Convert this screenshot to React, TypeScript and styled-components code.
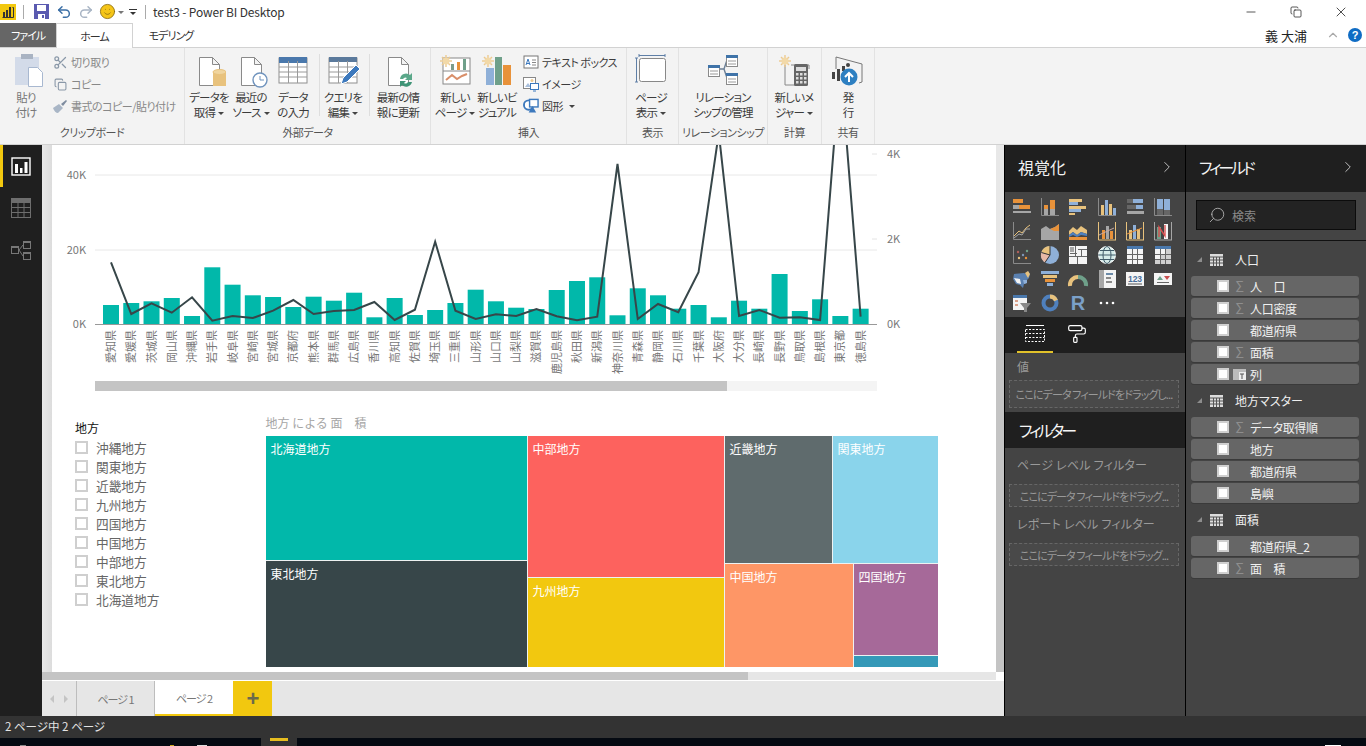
import React from 'react';
import styled, { createGlobalStyle } from 'styled-components';
import { Scissors, Undo2, Redo2, Smile, Minus, X, ChevronRight, ChevronUp, Search, PaintRoller, Copy } from 'lucide-react';

const Global = createGlobalStyle`
  html, body { margin: 0; padding: 0; overflow: hidden; background: #000; }
  * { box-sizing: border-box; }
  body { font-family: "Noto Sans CJK JP", "Liberation Sans", sans-serif; font-feature-settings: "palt"; }
`;

const Shell = styled.div`
  width: 1366px; height: 746px; display: flex; flex-direction: column; overflow: hidden; background: #fff;
`;
const TitleBar = styled.div`
  height: 23px; flex: none; display: flex; align-items: center; background: #fff; color: #333; font-size: 12px;
`;
const Qat = styled.div`
  display: flex; align-items: center; width: 153px; flex: none; height: 23px;
`;
const QatSlot = styled.span<{ $w: number }>`
  width: ${p => p.$w}px; flex: none; display: flex; align-items: center; justify-content: center;
`;
const QatSep = styled.span`
  width: 1px; height: 14px; background: #aaa; flex: none;
`;
const TitleText = styled.span`
  flex: 1; font-size: 12px; letter-spacing: -0.15px; color: #333;
`;
const WinBtns = styled.div`
  display: flex; width: 138px; flex: none; padding-right: 2px; color: #222; align-items: center;
`;
const WinBtn = styled.span`
  width: 45.3px; display: flex; justify-content: center;
`;
const TabRow = styled.div`
  height: 24px; flex: none; display: flex; align-items: stretch; background: #fff; font-size: 11px; letter-spacing: -1px; color: #333;
`;
const FileTab = styled.div`
  width: 56px; background: #666; color: #fff; display: flex; align-items: center; justify-content: center;
`;
const HomeTab = styled.div`
  width: 77px; background: #fff; border: 1px solid #d2d2d2; border-bottom: 0; margin-bottom: -1px; position: relative; z-index: 1;
  display: flex; align-items: center; justify-content: center;
`;
const RibbonTab = styled.div`
  width: 76px; display: flex; align-items: center; justify-content: center;
`;
const UserArea = styled.div`
  margin-left: auto; display: flex; align-items: center; padding-right: 4px; color: #222; font-size: 13px; letter-spacing: 0;
`;
const UserName = styled.span`
  margin-right: 19px;
`;
const Help = styled.span`
  width: 14px; height: 14px; border-radius: 50%; background: #0f6cc4; color: #fff; font-size: 11px; font-weight: 700;
  display: flex; align-items: center; justify-content: center; margin-left: 8px; font-family: "Liberation Sans", sans-serif;
`;
const Ribbon = styled.div`
  height: 98px; flex: none; display: flex; background: #f3f3f3; border-top: 1px solid #d2d2d2; border-bottom: 1px solid #d2d2d2;
`;
const Group = styled.div<{ $w: number }>`
  width: ${p => p.$w}px; flex: none; display: flex; flex-direction: column; border-right: 1px solid #e2e2e2;
`;
const GroupBody = styled.div<{ $pad?: number }>`
  flex: 1; display: flex; align-items: flex-start; padding: 2px 0 0 ${p => p.$pad ?? 0}px; min-height: 0;
`;
const GroupLabel = styled.div`
  height: 22px; flex: none; text-align: center; font-size: 11px; letter-spacing: -0.5px; line-height: 21px; color: #555; white-space: nowrap;
`;
const BigBtn = styled.div<{ $w?: number; $dim?: boolean }>`
  width: ${p => p.$w ?? 42}px; flex: none; display: flex; flex-direction: column; align-items: center;
  color: ${p => (p.$dim ? '#777' : '#3c3c3c')};
`;
const BigIcon = styled.div`
  height: 40px; display: flex; align-items: center; justify-content: center;
`;
const BigText = styled.div`
  font-size: 11.5px; line-height: 15px; text-align: center; white-space: nowrap; letter-spacing: -0.8px;
`;
const Caret = styled.span`
  display: inline-block; width: 0; height: 0; margin-left: 3px; vertical-align: 2px;
  border-left: 3px solid transparent; border-right: 3px solid transparent; border-top: 3px solid #444;
`;
const VSep = styled.div<{ $ml: number; $mr: number }>`
  width: 1px; height: 62px; margin: 4px ${p => p.$mr}px 0 ${p => p.$ml}px; background: #dedede; flex: none;
`;
const SmallCol = styled.div`
  display: flex; flex-direction: column; padding-top: 1px; margin-left: 5px;
`;
const SmallBtn = styled.div<{ $dim?: boolean }>`
  height: 22px; display: flex; align-items: center; gap: 3px; font-size: 11px; letter-spacing: -0.5px; white-space: nowrap;
  color: ${p => (p.$dim ? '#888' : '#3c3c3c')};
`;
const IconBox = styled.span`
  width: 16px; height: 16px; flex: none; display: flex; align-items: center; justify-content: center; color: #8a98a8;
`;
const Main = styled.div`
  height: 571px; flex: none; display: flex; background: #000;
`;
const Rail = styled.div`
  width: 42px; flex: none; background: #1f1f1f; display: flex; flex-direction: column;
`;
const RailItem = styled.div<{ $active?: boolean }>`
  height: 42px; display: flex; align-items: center; justify-content: center;
  border-left: 3px solid ${p => (p.$active ? '#f2c80f' : 'transparent')}; padding-right: 3px;
`;
const Work = styled.div`
  width: 962px; flex: none; display: flex; flex-direction: column; background: #e6e6e6;
`;
const CanvasRow = styled.div`
  height: 527px; flex: none; display: flex;
`;
const Gutter = styled.div`
  width: 10px; flex: none; background: linear-gradient(90deg, #e8e8e8, #dcdcdc);
`;
const Page = styled.div`
  width: 944px; flex: none; background: #fff; display: flex; flex-direction: column; overflow: hidden;
`;
const ChartSvg = styled.svg`
  display: block; flex: none; font-family: "Noto Sans CJK JP", sans-serif; font-feature-settings: normal;
`;
const Lower = styled.div`
  flex: 1; display: flex; padding-left: 23px;
`;
const Slicer = styled.div`
  width: 190.5px; flex: none; padding-top: 19px; font-feature-settings: normal;
`;
const SlicerTitle = styled.div`
  font-size: 12px; line-height: 18px; color: #111; margin-bottom: 1px;
`;
const SlicerRow = styled.div`
  height: 19px; display: flex; align-items: center; gap: 8px; font-size: 12.7px; color: #666;
`;
const Check = styled.span`
  width: 13px; height: 13px; border: 2px solid #cfcfcf; background: #fff; flex: none;
`;
const TreeWrap = styled.div`
  width: 672px; flex: none; display: flex; flex-direction: column; padding-top: 15px; font-feature-settings: normal;
`;
const TreeTitle = styled.div`
  height: 21px; font-size: 12px; line-height: 16px; color: #a6a6a6; white-space: pre;
`;
const Tree = styled.div`
  height: 231px; display: flex; gap: 1px; flex: none; background: #eef2f2;
`;
const TreeCol = styled.div<{ $w?: number }>`
  ${p => (p.$w ? `width:${p.$w}px;flex:none;` : 'flex:1;min-width:0;')}
  display: flex; flex-direction: column; gap: 1px;
`;
const TreeRow = styled.div<{ $h?: number }>`
  ${p => (p.$h ? `height:${p.$h}px;flex:none;` : 'flex:1;min-height:0;')}
  display: flex; gap: 1px;
`;
const Cell = styled.div<{ $bg: string; $basis: number }>`
  background: ${p => p.$bg}; flex: 0 0 ${p => p.$basis}px; color: #fff; font-size: 12px; line-height: 16px; padding: 5px 0 0 5px; overflow: hidden; white-space: nowrap;
`;
const Fill = styled.div<{ $bg: string }>`
  background: ${p => p.$bg}; flex: 1; color: #fff; font-size: 12px; line-height: 16px; padding: 5px 0 0 5px; min-width: 0; min-height: 0; overflow: hidden; white-space: nowrap;
`;
const VScroll = styled.div`
  width: 8px; flex: none; display: flex; flex-direction: column; background: #e8e8e8;
`;
const VThumb = styled.div`
  margin-top: 155px; flex: 1; background: #c4c4c4;
`;
const HScrollRow = styled.div`
  height: 8px; flex: none; display: flex; background: #fff;
`;
const HTrack = styled.div`
  width: 954px; flex: none; background: #e6e6e6;
`;
const HThumb = styled.div`
  width: 706px; height: 8px; background: #c4c4c4;
`;
const PageTabs = styled.div`
  height: 36px; flex: none; display: flex; border-top: 1px solid #fff; background: #e6e6e6; font-size: 11px; letter-spacing: -1px; color: #777;
`;
const Arrows = styled.div`
  width: 35px; flex: none; display: flex; align-items: center; justify-content: center; gap: 10px; border-right: 1px solid #bdbdbd;
`;
const Arrow = styled.span<{ $dir: 'l' | 'r' }>`
  width: 0; height: 0; border-top: 4px solid transparent; border-bottom: 4px solid transparent;
  ${p => p.$dir === 'l' ? 'border-right: 4px solid #c4c4c4;' : 'border-left: 4px solid #c4c4c4;'}
`;
const PageTab = styled.div<{ $active?: boolean }>`
  width: 78px; flex: none; display: flex; align-items: center; justify-content: center;
  ${p => p.$active
    ? 'background:#fff;border-bottom:2px solid #f2c80f;'
    : 'border-right:1px solid #bdbdbd;'}
`;
const AddTab = styled.div`
  width: 39px; flex: none; background: #f2c80f; color: #6b6b4b; display: flex; align-items: center; justify-content: center;
  font-size: 22px; font-weight: 700; line-height: 1; font-family: "Liberation Sans", sans-serif;
`;
const Pane = styled.div`
  width: 180px; flex: none; background: #444; display: flex; flex-direction: column; margin-left: 1px; color: #ddd;
`;
const PaneHead = styled.div`
  height: 47px; flex: none; background: #1f1f1f; color: #f2f2f2; display: flex; align-items: center; justify-content: space-between;
  font-size: 16px; padding: 0 9px 3px 13px;
`;
const KanaHead = styled(PaneHead)`
  letter-spacing: -3px;
`;
const VizGrid = styled.div`
  height: 125px; flex: none; display: grid; grid-template-columns: repeat(6, 28.2px); grid-auto-rows: 24px;
  padding: 3px 0 0 3px; justify-items: center; align-items: center;
`;
const VizIcon = styled.svg`
  overflow: visible;
`;
const VizTabs = styled.div`
  height: 36px; flex: none; background: #1f1f1f; display: flex; padding-left: 12px;
`;
const VizTab = styled.div<{ $active?: boolean }>`
  width: 36px; display: flex; align-items: center; justify-content: center; margin-right: 6px; color: #fff;
  border-bottom: 2px solid ${p => (p.$active ? '#e2c22a' : 'transparent')};
`;
const PaneLabel = styled.div<{ $h: number; $pb?: number }>`
  height: ${p => p.$h}px; flex: none; display: flex; align-items: center; padding: 0 0 ${p => p.$pb ?? 0}px 12px; font-size: 12px; letter-spacing: 0.2px; color: #9a9a9a; white-space: nowrap;
`;
const Drop = styled.div<{ $h: number }>`
  height: ${p => p.$h}px; flex: none; margin: 0 6px 0 4px; border: 1px dashed #666; font-size: 11px; letter-spacing: -0.9px; color: #999; white-space: nowrap;
  display: flex; align-items: center; justify-content: center; overflow: hidden; background: #494949;
`;
const FilterHead = styled.div`
  height: 36px; flex: none; margin-top: 4px; background: #1f1f1f; color: #f5f5f5; font-size: 16px; letter-spacing: -3px; display: flex; align-items: center; padding-left: 14px;
`;
const SearchArea = styled.div`
  height: 49px; flex: none; padding: 8px 10px 0; border-bottom: 1px solid #111;
`;
const SearchBox = styled.div`
  height: 30px; background: #232323; border: 1px solid #0c0c0c; display: flex; align-items: center; gap: 6px; padding-left: 11px; color: #8a8a8a; font-size: 12px;
`;
const FlipSearch = styled(Search)`
  transform: scaleX(-1);
`;
const FieldList = styled.div`
  padding: 4px 7px 0 5px; flex: 1;
`;
const TableHead = styled.div`
  height: 31px; display: flex; align-items: center; font-size: 12px; color: #eee; padding: 0 0 2px 6px;
`;
const Tri = styled.span`
  width: 0; height: 0; border-left: 5px solid transparent; border-bottom: 5px solid #8d8d8d; margin-right: 8px;
`;
const THIcon = styled.span`
  width: 13px; height: 12px; margin-right: 12px; display: flex;
`;
const FieldRow = styled.div`
  height: 20px; margin-bottom: 2px; background: #666; border-radius: 3px; box-shadow: 0 1px 0 #3a3a3a;
  display: flex; align-items: center; padding-left: 26px; font-size: 12px; letter-spacing: -0.3px; color: #f0f0f0; white-space: pre;
`;
const FieldCheck = styled.span`
  width: 12px; height: 12px; background: #fff; border: 2px solid #cfcfcf; flex: none; margin-right: 4px;
`;
const KindSlot = styled.span`
  width: 13px; flex: none; margin-right: 4px; color: #8e8e8e; font-size: 14px; text-align: center; line-height: 12px; display: flex; justify-content: center;
`;
const Status = styled.div`
  height: 22px; flex: none; background: #333; color: #e4e4e4; font-size: 11.5px; display: flex; align-items: center; padding: 0 0 2px 5px;
`;
const Taskbar = styled.div`
  height: 8px; flex: none; background: #050a12; display: flex; align-items: flex-end;
`;
const TaskMark = styled.span<{ $ml: number; $w: number; $c: string }>`
  margin-left: ${p => p.$ml}px; width: ${p => p.$w}px; height: 1px; background: ${p => p.$c}; flex: none;
`;
const TaskSlot = styled.div`
  margin-left: 54px; width: 36px; height: 8px; background: #333; display: flex; justify-content: center;
`;
const TaskIcon = styled.span`
  width: 18px; height: 3px; background: #e6bd20;
`;
const TaskEnd = styled.div`
  margin-left: auto; margin-right: 25px; width: 16px; height: 1px; background: #fff;
`;

const Doc = ({ children }: { children?: React.ReactNode }) => (
  <svg width="34" height="36" viewBox="0 0 34 36">
    <path d="M7.500 5.500h13l7 7v21h-20z M20.500 5.500v7h7" fill="#fff" stroke="#8a8a8a" />
    {children}
  </svg>
);
const GridSvg = ({ pen }: { pen?: boolean }) => (
  <svg width="34" height="34" viewBox="0 0 34 34">
    <rect x="3" y="5" width="28" height="25" fill="#fff" stroke="#8f8f8f" />
    <rect x="3" y="4" width="28" height={pen ? 5 : 6} fill={pen ? '#5b7a9c' : '#4a78ac'} />
    {[14, 19, 24].map(y => <line key={y} x1="3" x2="31" y1={y} y2={y} stroke="#9a9a9a" />)}
    {[12.5, 21.5].map(x => <line key={x} x1={x} x2={x} y1="8" y2="30" stroke="#9a9a9a" />)}
    {pen && <path d="M15 31l2-6 13-13 4 4-13 13z" fill="#3d79bd" stroke="#fff" />}
  </svg>
);
const Sun = () => (
  <g>
    <g stroke="#ecc98f" strokeWidth="1.4">
      <line x1="2" y1="8" x2="14" y2="8" /><line x1="8" y1="2" x2="8" y2="14" />
      <line x1="4" y1="4" x2="12" y2="12" /><line x1="12" y1="4" x2="4" y2="12" />
    </g>
    <circle cx="8" cy="8" r="3.500" fill="#f2d9a8" />
  </g>
);
const IcClipboard = () => (
  <svg width="36" height="36" viewBox="-6 0 36 36">
    <rect x="1" y="5" width="24" height="28" fill="#d3dbe9" />
    <rect x="7" y="2" width="12" height="5" fill="#a9b3c2" />
    <path d="M14.500 15.500h9l5 5v14h-14z" fill="#fff" stroke="#a8b8d0" />
  </svg>
);
const IcBrush = () => (
  <svg width="16" height="16" viewBox="0 0 16 16">
    <path d="M1 10l6-4 4 4-5 5c-2 0-4-2-5-5z" fill="#a9b6c6" /><path d="M9 6l5-4 1 1-4 5z" fill="#7f8da0" />
  </svg>
);
const IcData = () => (
  <Doc><rect x="21" y="20" width="13" height="14" fill="#e8c27d" /><ellipse cx="27.500" cy="20" rx="6.500" ry="2.500" fill="#f0d59f" stroke="#e8c27d" /></Doc>
);
const IcRecent = () => (
  <Doc><circle cx="26" cy="28" r="7" fill="#fff" stroke="#6f93bd" strokeWidth="1.400" /><path d="M26 24v4h4" fill="none" stroke="#6f93bd" /></Doc>
);
const IcRefresh = () => (
  <Doc><path d="M19 27a6 6 0 0 1 10-4l2-2v7h-7l2-2a3 3 0 0 0-4 1z" fill="#5ba88a" /><path d="M31 30a6 6 0 0 1-10 3l-2 2v-6h6l-2 2a3 3 0 0 0 4-1z" fill="#3f9476" /></Doc>
);
const IcNewPage = () => (
  <svg width="34" height="34" viewBox="0 0 34 34">
    <rect x="5" y="5" width="27" height="26" fill="#fff" stroke="#888" />
    <line x1="5" y1="18" x2="32" y2="18" stroke="#888" />
    <rect x="13" y="11" width="3" height="6" fill="#7c9c8a" /><rect x="19" y="9" width="3" height="8" fill="#e8923a" /><rect x="25" y="6" width="3" height="11" fill="#6fa08a" />
    <path d="M8 27l6-5 5 4 5-3 5-2" fill="none" stroke="#d98f6a" strokeWidth="2" />
    <Sun />
  </svg>
);
const IcNewVisual = () => (
  <svg width="34" height="34" viewBox="0 0 34 34">
    <rect x="6" y="15" width="8" height="17" fill="#8fb0d8" /><rect x="15" y="4" width="7" height="28" fill="#6fa08a" /><rect x="23" y="12" width="8" height="20" fill="#e8923a" />
    <Sun />
  </svg>
);
const IcTextBox = () => (
  <svg width="16" height="16" viewBox="0 0 16 16"><rect x="1" y="2" width="14" height="12" fill="#fff" stroke="#777" /><path d="M3 11l2-6 2 6M4 9.500h2" fill="none" stroke="#3d79bd" /><path d="M9 6h4M9 8.500h4M9 11h4" stroke="#888" /></svg>
);
const IcImage = () => (
  <svg width="16" height="16" viewBox="0 0 16 16"><rect x="0.500" y="1.500" width="12" height="11" fill="#fff" stroke="#888" /><path d="M2 11l3-4 3 4z" fill="#a9bfdc" /><circle cx="9" cy="4.500" r="1.500" fill="#ecc98f" /><rect x="7.500" y="7.500" width="8" height="6" fill="#fff" stroke="#3d79bd" /><path d="M10 15h3" stroke="#3d79bd" /></svg>
);
const IcShapes = () => (
  <svg width="17" height="16" viewBox="0 0 17 16"><circle cx="6" cy="7" r="5" fill="#fff" stroke="#3d79bd" strokeWidth="2" /><rect x="7" y="1" width="9" height="8" fill="#fff" stroke="#3d79bd" strokeWidth="1.500" /><path d="M6 15l4-7 4 7z" fill="#3d79bd" /></svg>
);
const IcPageView = () => (
  <svg width="32" height="32" viewBox="0 0 32 32"><rect x="4.500" y="4.500" width="26" height="23" rx="2" fill="#fff" stroke="#888" /><path d="M4 1.500h26M4 0v3M30 0v3M1.500 4v24M0 4h3M0 28h3" stroke="#5f7fa6" /></svg>
);
const IcRelation = () => (
  <svg width="32" height="32" viewBox="0 0 32 32">
    <path d="M12 15h5l3-9M17 15l3 9" fill="none" stroke="#6b7f96" strokeWidth="1.400" />
    {[[1, 11], [19, 1], [19, 19]].map(([x, y]) => (
      <g key={x + '-' + y}><rect x={x + 0.5} y={y + 0.5} width="11" height="11" fill="#fff" stroke="#8a8a8a" /><rect x={x} y={y} width="12" height="3" fill="#3f73a8" /><path d={`M${x + 2} ${y + 6}h8M${x + 2} ${y + 9}h8`} stroke="#999" /></g>
    ))}
  </svg>
);
const IcMeasure = () => (
  <svg width="34" height="34" viewBox="0 0 34 34">
    <path d="M8 12v20h18M32 12v4" fill="none" stroke="#888" /><path d="M14 12h18" stroke="#888" />
    <rect x="17" y="11" width="14" height="22" rx="1.500" fill="#666" />
    <rect x="19" y="14" width="10" height="4" fill="#ddd" />
    {[20, 24, 28].map(y => [19, 23, 27].map(x => <rect key={x + '.' + y} x={x} y={y} width="2.500" height="2.500" fill="#ddd" />))}
    <Sun />
  </svg>
);
const IcPublish = () => (
  <svg width="34" height="34" viewBox="0 0 34 34">
    <path d="M5 4l26 7v18l-3 1M5 4v12" fill="none" stroke="#777" />
    <rect x="1" y="19" width="3" height="7" fill="#444" /><rect x="6" y="16" width="3" height="12" fill="#444" /><rect x="11" y="13" width="3" height="5" fill="#444" />
    <circle cx="18" cy="24" r="8.500" fill="#2d7fc1" /><path d="M18 29v-9M14 24l4-4 4 4" fill="none" stroke="#fff" strokeWidth="2" />
    <circle cx="17" cy="12" r="2" fill="#444" />
  </svg>
);
const Logo = () => (
  <svg width="16" height="16" viewBox="0 0 16 16"><rect width="16" height="16" fill="#f2c80f" /><rect x="3" y="8" width="2" height="5" fill="#333" /><rect x="6" y="6" width="2" height="7" fill="#333" /><rect x="9" y="3" width="2" height="10" fill="#333" /><path d="M12.500 3.500h1v10h-11" fill="none" stroke="#333" /></svg>
);
const Save = () => (
  <svg width="15" height="15" viewBox="0 0 15 15"><rect width="15" height="15" fill="#5a5ab0" /><rect x="3" y="1" width="9" height="6" fill="#fff" /><rect x="4" y="10" width="7" height="5" fill="#fff" /><rect x="8" y="11" width="2" height="3" fill="#5a5ab0" /></svg>
);
const Drop2 = () => (
  <svg width="8" height="8" viewBox="0 0 8 8"><path d="M1 3h6L4 6z" fill="#777" /></svg>
);
const QatMore = () => (
  <svg width="8" height="8" viewBox="0 0 8 8"><path d="M0 1.500h8" stroke="#333" /><path d="M1 4h6L4 7z" fill="#333" /></svg>
);
const RailReport = () => (
  <svg width="20" height="19" viewBox="0 0 20 19"><rect x="1" y="1" width="18" height="17" fill="#1f1f1f" stroke="#fff" strokeWidth="1.400" /><rect x="4" y="7" width="3" height="9" fill="#fff" /><rect x="9" y="11" width="2.500" height="5" fill="#fff" /><rect x="13.500" y="5" width="3" height="11" fill="#fff" /></svg>
);
const RailData = () => (
  <svg width="20" height="20" viewBox="0 0 20 20"><rect x="0.500" y="0.500" width="19" height="19" fill="none" stroke="#6e6e6e" /><rect y="0" width="20" height="5" fill="#6e6e6e" />{[9.5, 14.5].map(y => <line key={y} x1="0" x2="20" y1={y} y2={y} stroke="#6e6e6e" />)}{[7, 13].map(x => <line key={x} x1={x} x2={x} y1="4" y2="20" stroke="#6e6e6e" />)}</svg>
);
const RailModel = () => (
  <svg width="20" height="19" viewBox="0 0 20 19" fill="none" stroke="#777"><rect x="0.500" y="5.500" width="7" height="7" /><rect x="12.500" y="0.500" width="7" height="7" /><rect x="12.500" y="11.500" width="7" height="7" /><path d="M8 9l4-5M8 9l4 6" /><path d="M1 6h6M13 1h6M13 12h6" strokeWidth="2" /></svg>
);
const TableGlyph = () => (
  <svg width="13" height="12" viewBox="0 0 13 12"><rect width="13" height="12" fill="#ddd" />{[3, 6, 9].map(y => <line key={y} x1="0" x2="13" y1={y} y2={y} stroke="#555" />)}{[3.5, 6.5, 9.5].map(x => <line key={x} x1={x} x2={x} y1="3" y2="12" stroke="#555" />)}</svg>
);
const CalcGlyph = () => (
  <svg width="13" height="11" viewBox="0 0 13 11"><rect width="13" height="11" fill="#bbb" /><rect x="6" y="3" width="7" height="8" fill="#eee" /><path d="M7 5h4M9 5v5" stroke="#555" /></svg>
);
const FieldsGlyph = () => (
  <svg width="22" height="20" viewBox="0 0 22 20" fill="none" stroke="#fff"><path d="M2 1.500h18" /><rect x="1.500" y="5.500" width="19" height="12" strokeDasharray="2 1.500" /><path d="M1.500 9.500h19M1.500 13.500h19" strokeDasharray="2 1.500" /></svg>
);

const O = '#e8923a', B = '#8fb0d8', T = '#e8c27d', G = '#a6a6a6', A = '#8a8a8a', W = '#f4f4f4', D = '#666', S = '#6fa08a';
const R = ({ x, y, w, h, c }: { x: number; y: number; w: number; h: number; c: string }) => <rect x={x} y={y} width={w} height={h} fill={c} />;
const Axes = () => <path d="M.5 0v17.500H18" fill="none" stroke={A} />;
const vizIcons: React.ReactNode[] = [
  <><R x={0} y={1} w={10} h={4} c={O} /><R x={0} y={7} w={6} h={4} c={G} /><R x={6} y={7} w={11} h={4} c={O} /><R x={0} y={13} w={18} h={2} c={G} /></>,
  <><Axes /><R x={3} y={7} w={4} h={10} c={O} /><R x={3} y={11} w={4} h={6} c={G} /><R x={9} y={2} w={5} h={9} c={O} /><R x={9} y={11} w={5} h={6} c={G} /></>,
  <><R x={0} y={1} w={13} h={3} c={T} /><R x={0} y={4} w={9} h={3} c={B} /><R x={0} y={8} w={17} h={3} c={T} /><R x={0} y={11} w={12} h={3} c={B} /><R x={0} y={15} w={6} h={2} c={T} /></>,
  <><Axes /><R x={3} y={7} w={3} h={10} c={T} /><R x={7} y={2} w={3} h={15} c={B} /><R x={11} y={6} w={3} h={11} c={T} /><R x={15} y={10} w={3} h={7} c={B} /></>,
  <><R x={1} y={1} w={6} h={4} c={D} /><R x={7} y={1} w={10} h={4} c={B} /><R x={1} y={7} w={9} h={4} c={D} /><R x={10} y={7} w={7} h={4} c={B} /><R x={1} y={13} w={17} h={3} c={G} /></>,
  <><Axes /><R x={3} y={1} w={6} h={10} c={B} /><R x={3} y={11} w={6} h={6} c={D} /><R x={10} y={1} w={6} h={11} c={B} /><R x={10} y={12} w={6} h={5} c={D} /></>,
  <><Axes /><path d="M1 14l5-5 3 2 4-5 4-3" fill="none" stroke={T} /><path d="M1 16l5-4 3 1 4-6 4 0" fill="none" stroke={G} /></>,
  <><path d="M0 18V7l5-3 4 3 5-2 4-3v16z" fill={G} /><path d="M9 7l5-2 4-3v7h-5z" fill={O} /></>,
  <><path d="M0 9l4-4 4 3 4-4 6 4v4l-6-2-4 3-4-3-4 3z" fill={T} /><path d="M0 13l4-3 4 3 4-3 6 2v2l-6-1-4 2-4-2-4 2z" fill="#4f80bd" /><R x={0} y={15} w={18} h={3} c={O} /></>,
  <><path d="M.5 0v18H18M17.500 0v18" fill="none" stroke={T} /><R x={4} y={8} w={3} h={9} c={O} /><R x={8} y={4} w={3} h={13} c={G} /><R x={12} y={9} w={3} h={8} c={O} /><path d="M1 13l15-7" stroke="#c9a9a0" /></>,
  <><path d="M.5 0v18H18M17.500 0v18" fill="none" stroke={T} /><R x={3} y={8} w={3} h={9} c={T} /><R x={7} y={3} w={3} h={14} c={B} /><R x={11} y={7} w={3} h={10} c={T} /><path d="M1 12l15-6" stroke={O} /></>,
  <><path d="M.5 0v18H18M17.500 0v18" fill="none" stroke={G} /><R x={3} y={5} w={4} h={12} c={S} /><R x={10} y={2} w={4} h={15} c={W} /><path d="M5 15V5l6 9V3" fill="none" stroke="#d84f4f" strokeWidth="1.400" /></>,
  <><Axes /><circle cx="5" cy="6" r="1.200" fill="#b0605c" /><circle cx="10" cy="9" r="1.200" fill="#7f98b8" /><circle cx="14" cy="5" r="1.200" fill={S} /><circle cx="6" cy="12" r="1.200" fill={T} /><circle cx="13" cy="12" r="1.200" fill={O} /></>,
  <><circle cx="9" cy="9" r="9" fill={B} /><path d="M9 9V0A9 9 0 0 0 .4 6.500z" fill={T} /><path d="M9 9L.4 6.500A9 9 0 0 0 4 16.500z" fill="#e6b8a6" /><path d="M9 0v9l-8.600-2.500M9 9L4 16.500" fill="none" stroke="#333" /></>,
  <><R x={0} y={0} w={18} h={18} c={W} /><R x={1} y={7} w={7} h={1} c={D} /><R x={6} y={0} w={1} h={10} c={D} /><R x={0} y={10} w={18} h={1} c={D} /><R x={8} y={11} w={1} h={7} c={D} /><R x={9} y={3} w={9} h={1} c={D} /><R x={12} y={4} w={1} h={6} c={D} /><R x={1} y={1} w={4} h={5} c={G} /></>,
  <><circle cx="9" cy="9" r="8.500" fill="#d5ecea" stroke="#fff" /><ellipse cx="9" cy="9" rx="4" ry="8.500" fill="none" stroke="#3f5a68" /><path d="M0 9h18M2 4.500h14M2 13.500h14" stroke="#3f5a68" /></>,
  <><R x={1} y={0} w={16} h={18} c={W} /><R x={1} y={0} w={16} h={3} c="#4a78ac" />{[8, 13].map(y => <R key={y} x={1} y={y} w={16} h={1} c={D} />)}{[6, 11].map(x => <R key={x} x={x} y={3} w={1} h={15} c={D} />)}</>,
  <><R x={1} y={0} w={16} h={18} c="#cfcfcf" /><R x={1} y={0} w={16} h={3} c="#4a78ac" /><R x={1} y={3} w={5} h={5} c={W} /><R x={7} y={3} w={5} h={5} c={W} /><R x={1} y={9} w={5} h={4} c={W} />{[8, 13].map(y => <R key={y} x={1} y={y} w={16} h={1} c={D} />)}{[6, 11].map(x => <R key={x} x={x} y={3} w={1} h={15} c={D} />)}</>,
  <><path d="M1 4l10-1 3 1 1-3 2 3-1 4-2 2 0 3-3 1-1 4-3-3-4-1-3-5z" fill="#5a80b0" /><path d="M12 3l3-2 2 3-2 4z" fill={T} /><path d="M1 8l6 1 1 5-4-1z" fill={W} /><path d="M10 10l4 0 0 3-3 1z" fill={B} /></>,
  <><R x={0} y={1} w={18} h={3} c={B} /><R x={2} y={5} w={14} h={3} c={T} /><R x={4} y={9} w={10} h={3} c={O} /><R x={6} y={13} w={6} h={3} c={B} /></>,
  <><path d="M1 16a8 8 0 0 1 8-9" fill="none" stroke={T} strokeWidth="4" /><path d="M9 7a8 8 0 0 1 8 9" fill="none" stroke={S} strokeWidth="4" /></>,
  <><R x={1} y={0} w={17} h={18} c={W} /><R x={1} y={0} w={5} h={18} c={G} /><R x={8} y={3} w={7} h={2} c="#6b8aa8" /><R x={8} y={7} w={5} h={2} c={A} /><R x={8} y={11} w={6} h={2} c={A} /></>,
  <><R x={0} y={2} w={18} h={14} c={W} /><path d="M2 14h14" stroke="#555" /><text x="9" y="11.500" textAnchor="middle" fontSize="8.500" fontFamily="Liberation Sans" fontWeight="700" fill="#4a6f9a">123</text></>,
  <><R x={0} y={3} w={18} h={12} c={W} /><path d="M3 10l3-4 3 4z" fill={S} /><path d="M10 6h6l-3 4z" fill="#c85050" /><R x={3} y={12} w={12} h={1} c={D} /></>,
  <><R x={0} y={1} w={14} h={15} c={W} /><R x={0} y={1} w={14} h={3} c="#4a78ac" /><R x={2} y={6} w={3} h={2} c="#d9a08a" /><R x={2} y={10} w={3} h={2} c="#d9a08a" /><path d="M7 9h11l-4 5v4h-3v-4z" fill="#888" /></>,
  <><circle cx="9" cy="9" r="6.500" fill="none" stroke="#4f80bd" strokeWidth="4" /><path d="M9 2.500a6.500 6.500 0 0 1 6 4" fill="none" stroke={T} strokeWidth="4" /></>,
  <text x="9" y="16" textAnchor="middle" fontSize="20" fontWeight="700" fontFamily="Liberation Sans" fill="#7ba0c8">R</text>,
  <><circle cx="3" cy="9" r="1.300" fill="#fff" /><circle cx="9" cy="9" r="1.300" fill="#fff" /><circle cx="15" cy="9" r="1.300" fill="#fff" /></>,
];

type Pref = { n: string; b: number; l: number };
const prefs: Pref[] = [
  { n: '愛知県', b: 19, l: 262.3 }, { n: '愛媛県', b: 21, l: 314 }, { n: '茨城県', b: 22.7, l: 303.3 }, { n: '岡山県', b: 26, l: 312.7 },
  { n: '沖縄県', b: 8, l: 297.3 }, { n: '岩手県', b: 56.7, l: 320.7 }, { n: '岐阜県', b: 39.3, l: 316 }, { n: '宮崎県', b: 28.7, l: 318 },
  { n: '宮城県', b: 27, l: 310.7 }, { n: '京都府', b: 17, l: 300 }, { n: '熊本県', b: 27.3, l: 314 }, { n: '群馬県', b: 23.3, l: 311 },
  { n: '広島県', b: 31.3, l: 310 }, { n: '香川県', b: 6.7, l: 302 }, { n: '高知県', b: 26, l: 320 }, { n: '佐賀県', b: 9, l: 309.7 },
  { n: '埼玉県', b: 14, l: 241.7 }, { n: '三重県', b: 21, l: 310.7 }, { n: '山形県', b: 34.3, l: 319 }, { n: '山口県', b: 22.7, l: 314.3 },
  { n: '山梨県', b: 16.3, l: 316 }, { n: '滋賀県', b: 15, l: 309 }, { n: '鹿児島県', b: 34, l: 316.3 }, { n: '秋田県', b: 43, l: 320.3 },
  { n: '新潟県', b: 46.7, l: 316.7 }, { n: '神奈川県', b: 8.7, l: 164 }, { n: '青森県', b: 35.7, l: 319 }, { n: '静岡県', b: 28.7, l: 304 },
  { n: '石川県', b: 15.3, l: 312.3 }, { n: '千葉県', b: 19, l: 272.3 }, { n: '大阪府', b: 6.7, l: 133 }, { n: '大分県', b: 23.3, l: 316 },
  { n: '長崎県', b: 15.3, l: 310 }, { n: '長野県', b: 50, l: 317.7 }, { n: '鳥取県', b: 13, l: 317.3 }, { n: '島根県', b: 24.7, l: 320 },
  { n: '東京都', b: 8, l: 64 }, { n: '徳島県', b: 15.3, l: 316.7 },
];
const cx = (i: number) => 111 + i * 20.26;

const Chart = () => (
  <ChartSvg width="944" height="255" viewBox="52 145 944 255">
    {[175, 250].map(y => <line key={y} x1="95" x2="877" y1={y} y2={y} stroke="#e8e8e8" />)}
    {[154, 239].map(y => <line key={y} x1="872" x2="877" y1={y} y2={y} stroke="#e4e4e4" />)}
    {[['40K', 175], ['20K', 250], ['0K', 324]].map(([t, y]) => (
      <text key={t} x="86" y={(y as number) + 4} textAnchor="end" fontSize="11" fill="#777">{t}</text>
    ))}
    {[['4K', 158], ['2K', 243], ['0K', 328]].map(([t, y]) => (
      <text key={t} x="887" y={y as number} fontSize="11" fill="#777">{t}</text>
    ))}
    {prefs.map((p, i) => <rect key={p.n} x={cx(i) - 8} y={324 - p.b} width="16" height={p.b} fill="#01b8aa" />)}
    <line x1="95" x2="877" y1="324.500" y2="324.500" stroke="#999" />
    <polyline fill="none" stroke="#374649" strokeWidth="2" strokeLinejoin="miter" points={prefs.map((p, i) => `${cx(i)},${p.l}`).join(' ')} />
    {prefs.map((p, i) => (
      <text key={p.n} transform={`translate(${cx(i) + 4} 330) rotate(-90)`} textAnchor="end" fontSize="11" fill="#777">{p.n}</text>
    ))}
    <rect x="95" y="381" width="782" height="10" fill="#f4f4f4" />
    <rect x="95" y="381" width="632" height="10" fill="#c4c4c4" />
  </ChartSvg>
);

const regions = ['沖縄地方', '関東地方', '近畿地方', '九州地方', '四国地方', '中国地方', '中部地方', '東北地方', '北海道地方'];
const tables = [
  { name: '人口', rows: [['人　口', 's'], ['人口密度', 's'], ['都道府県', ''], ['面積', 's'], ['列', 'c']] },
  { name: '地方マスター', rows: [['データ取得順', 's'], ['地方', ''], ['都道府県', ''], ['島嶼', '']] },
  { name: '面積', rows: [['都道府県_2', ''], ['面　積', 's']] },
];

export default function App() {
  return (
    <Shell>
      <Global />
      <TitleBar>
        <Qat>
          <QatSlot $w={16}><Logo /></QatSlot>
          <QatSlot $w={7} /><QatSep /><QatSlot $w={9} />
          <QatSlot $w={17}><Save /></QatSlot>
          <QatSlot $w={6} />
          <QatSlot $w={16}><Undo2 size={16} color="#3a6ea5" strokeWidth={2.2} /></QatSlot>
          <QatSlot $w={6} />
          <QatSlot $w={16}><Redo2 size={16} color="#a8b4c4" strokeWidth={2.2} /></QatSlot>
          <QatSlot $w={5} />
          <QatSlot $w={17}><Smile size={17} color="#8a6d10" fill="#f5c518" strokeWidth={1.2} /></QatSlot>
          <QatSlot $w={9}><Drop2 /></QatSlot>
          <QatSlot $w={3} />
          <QatSlot $w={10}><QatMore /></QatSlot>
          <QatSlot $w={7} /><QatSep />
        </Qat>
        <TitleText>test3 - Power BI Desktop</TitleText>
        <WinBtns>
          <WinBtn><Minus size={14} strokeWidth={1.3} /></WinBtn>
          <WinBtn><Copy size={12} strokeWidth={1.5} /></WinBtn>
          <WinBtn><X size={16} strokeWidth={1.2} /></WinBtn>
        </WinBtns>
      </TitleBar>
      <TabRow>
        <FileTab>ファイル</FileTab>
        <HomeTab>ホーム</HomeTab>
        <RibbonTab>モデリング</RibbonTab>
        <UserArea>
          <UserName>義 大浦</UserName>
          <ChevronUp size={14} color="#aaa" />
          <Help>?</Help>
        </UserArea>
      </TabRow>
      <Ribbon>
        <Group $w={185}>
          <GroupBody $pad={5}>
            <BigBtn $dim><BigIcon><IcClipboard /></BigIcon><BigText>貼り<br />付け</BigText></BigBtn>
            <SmallCol>
              <SmallBtn $dim><IconBox><Scissors size={15} /></IconBox>切り取り</SmallBtn>
              <SmallBtn $dim><IconBox><Copy size={13} /></IconBox>コピー</SmallBtn>
              <SmallBtn $dim><IconBox><IcBrush /></IconBox>書式のコピー/貼り付け</SmallBtn>
            </SmallCol>
          </GroupBody>
          <GroupLabel>クリップボード</GroupLabel>
        </Group>
        <Group $w={246}>
          <GroupBody $pad={3}>
            <BigBtn><BigIcon><IcData /></BigIcon><BigText>データを<br />取得<Caret /></BigText></BigBtn>
            <BigBtn><BigIcon><IcRecent /></BigIcon><BigText>最近の<br />ソース<Caret /></BigText></BigBtn>
            <BigBtn><BigIcon><GridSvg /></BigIcon><BigText>データ<br />の入力</BigText></BigBtn>
            <VSep $ml={5} $mr={2} />
            <BigBtn><BigIcon><GridSvg pen /></BigIcon><BigText>クエリを<br />編集<Caret /></BigText></BigBtn>
            <VSep $ml={5} $mr={3} />
            <BigBtn $w={50}><BigIcon><IcRefresh /></BigIcon><BigText>最新の情<br />報に更新</BigText></BigBtn>
          </GroupBody>
          <GroupLabel>外部データ</GroupLabel>
        </Group>
        <Group $w={196}>
          <GroupBody $pad={3}>
            <BigBtn><BigIcon><IcNewPage /></BigIcon><BigText>新しい<br />ページ<Caret /></BigText></BigBtn>
            <BigBtn><BigIcon><IcNewVisual /></BigIcon><BigText>新しいビ<br />ジュアル</BigText></BigBtn>
            <SmallCol>
              <SmallBtn><IconBox><IcTextBox /></IconBox>テキスト ボックス</SmallBtn>
              <SmallBtn><IconBox><IcImage /></IconBox>イメージ</SmallBtn>
              <SmallBtn><IconBox><IcShapes /></IconBox>図形<Caret /></SmallBtn>
            </SmallCol>
          </GroupBody>
          <GroupLabel>挿入</GroupLabel>
        </Group>
        <Group $w={52}>
          <GroupBody $pad={3}>
            <BigBtn><BigIcon><IcPageView /></BigIcon><BigText>ページ<br />表示<Caret /></BigText></BigBtn>
          </GroupBody>
          <GroupLabel>表示</GroupLabel>
        </Group>
        <Group $w={89}>
          <GroupBody>
            <BigBtn $w={88}><BigIcon><IcRelation /></BigIcon><BigText>リレーション<br />シップの管理</BigText></BigBtn>
          </GroupBody>
          <GroupLabel>リレーションシップ</GroupLabel>
        </Group>
        <Group $w={54}>
          <GroupBody $pad={5}>
            <BigBtn><BigIcon><IcMeasure /></BigIcon><BigText>新しいメ<br />ジャー<Caret /></BigText></BigBtn>
          </GroupBody>
          <GroupLabel>計算</GroupLabel>
        </Group>
        <Group $w={53}>
          <GroupBody $pad={5}>
            <BigBtn><BigIcon><IcPublish /></BigIcon><BigText>発<br />行</BigText></BigBtn>
          </GroupBody>
          <GroupLabel>共有</GroupLabel>
        </Group>
      </Ribbon>
      <Main>
        <Rail>
          <RailItem $active><RailReport /></RailItem>
          <RailItem><RailData /></RailItem>
          <RailItem><RailModel /></RailItem>
        </Rail>
        <Work>
          <CanvasRow>
            <Gutter />
            <Page>
              <Chart />
              <Lower>
                <Slicer>
                  <SlicerTitle>地方</SlicerTitle>
                  {regions.map(r => <SlicerRow key={r}><Check />{r}</SlicerRow>)}
                </Slicer>
                <TreeWrap>
                  <TreeTitle>地方 による 面　積</TreeTitle>
                  <Tree>
                    <TreeCol $w={261}>
                      <Cell $bg="#01b8aa" $basis={124}>北海道地方</Cell>
                      <Fill $bg="#374649">東北地方</Fill>
                    </TreeCol>
                    <TreeCol $w={196}>
                      <Cell $bg="#fd625e" $basis={141}>中部地方</Cell>
                      <Fill $bg="#f2c80f">九州地方</Fill>
                    </TreeCol>
                    <TreeCol>
                      <TreeRow $h={127}>
                        <Cell $bg="#5f6b6d" $basis={107}>近畿地方</Cell>
                        <Fill $bg="#8ad4eb">関東地方</Fill>
                      </TreeRow>
                      <TreeRow>
                        <Cell $bg="#fe9666" $basis={128}>中国地方</Cell>
                        <TreeCol>
                          <Cell $bg="#a66999" $basis={91}>四国地方</Cell>
                          <Fill $bg="#3599b8" />
                        </TreeCol>
                      </TreeRow>
                    </TreeCol>
                  </Tree>
                </TreeWrap>
              </Lower>
            </Page>
            <VScroll><VThumb /></VScroll>
          </CanvasRow>
          <HScrollRow><HTrack><HThumb /></HTrack></HScrollRow>
          <PageTabs>
            <Arrows><Arrow $dir="l" /><Arrow $dir="r" /></Arrows>
            <PageTab>ページ 1</PageTab>
            <PageTab $active>ページ 2</PageTab>
            <AddTab>+</AddTab>
          </PageTabs>
        </Work>
        <Pane>
          <PaneHead>視覚化<ChevronRight size={18} strokeWidth={1} /></PaneHead>
          <VizGrid>
            {vizIcons.map((ic, i) => (
              <VizIcon key={i} width="18" height="18" viewBox="0 0 18 18">{ic}</VizIcon>
            ))}
          </VizGrid>
          <VizTabs>
            <VizTab $active><FieldsGlyph /></VizTab>
            <VizTab><PaintRoller size={20} strokeWidth={1.4} /></VizTab>
          </VizTabs>
          <PaneLabel $h={27}>値</PaneLabel>
          <Drop $h={28}>ここにデータ フィールドをドラッグし...</Drop>
          <FilterHead>フィルター</FilterHead>
          <PaneLabel $h={36} $pb={3}>ページ レベル フィルター</PaneLabel>
          <Drop $h={23}>ここにデータ フィールドをドラッグ...</Drop>
          <PaneLabel $h={36} $pb={3}>レポート レベル フィルター</PaneLabel>
          <Drop $h={23}>ここにデータ フィールドをドラッグ...</Drop>
        </Pane>
        <Pane>
          <KanaHead>フィールド<ChevronRight size={18} strokeWidth={1} /></KanaHead>
          <SearchArea>
            <SearchBox><FlipSearch size={18} strokeWidth={1.1} color="#bbb" />検索</SearchBox>
          </SearchArea>
          <FieldList>
            {tables.map(t => (
              <React.Fragment key={t.name}>
                <TableHead><Tri /><THIcon><TableGlyph /></THIcon>{t.name}</TableHead>
                {t.rows.map(([label, kind]) => (
                  <FieldRow key={label}>
                    <FieldCheck />
                    <KindSlot>{kind === 's' ? 'Σ' : kind === 'c' ? <CalcGlyph /> : ''}</KindSlot>
                    {label}
                  </FieldRow>
                ))}
              </React.Fragment>
            ))}
          </FieldList>
        </Pane>
      </Main>
      <Status>2 ページ中 2 ページ</Status>
      <Taskbar>
        <TaskMark $ml={20} $w={6} $c="#888" />
        <TaskMark $ml={144} $w={4} $c="#c9a820" />
        <TaskMark $ml={23} $w={10} $c="#ddd" />
        <TaskSlot><TaskIcon /></TaskSlot>
        <TaskEnd />
      </Taskbar>
    </Shell>
  );
}
